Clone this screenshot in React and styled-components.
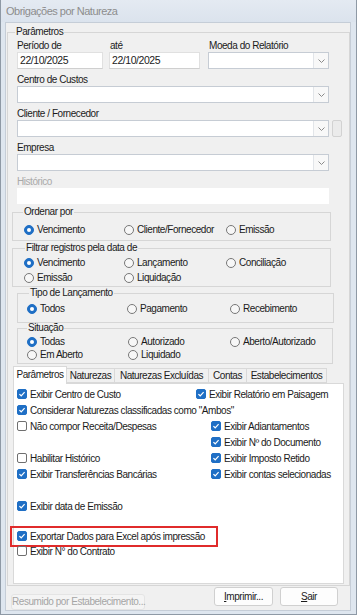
import React from 'react';
import styled, { createGlobalStyle } from 'styled-components';

const GlobalStyle = createGlobalStyle`
  html, body { margin: 0; padding: 0; background: #dee6ef; }
  body {
    font-family: "Liberation Sans", Arial, sans-serif;
    font-size: 10px;
    letter-spacing: -0.45px;
    color: #1b1b1b;
  }
`;

const Window = styled.div`
  width: 357px;
  height: 615px;
  box-sizing: border-box;
  border: 1px solid #8e99a5;
  border-top: none;
  background: #dee6ef;
  display: flex;
  flex-direction: column;
`;

const TitleBar = styled.div`
  height: 22px;
  line-height: 22px;
  padding-left: 5px;
  font-size: 11px;
  letter-spacing: -0.5px;
  color: #8d8d8d;
  background: linear-gradient(#e4eaf2, #dbe3ed);
`;

const Client = styled.div`
  flex: 1;
  margin: 0 5px 3px 4px;
  background: #f0f0f0;
  border: 1px solid #c5cdd7;
  display: flex;
  flex-direction: column;
`;

const Group = styled.fieldset`
  margin: ${p => p.$top || 0}px 0 0 ${p => p.$left || 0}px;
  width: ${p => (p.$width ? `${p.$width}px` : 'auto')};
  box-sizing: border-box;
  min-width: 0;
  padding: ${p => p.$pad || '0'};
  border: 1px solid #d6d6d6;
`;

const Legend = styled.legend`
  margin-left: ${p => p.$ml || 7}px;
  padding: 0 1px;
  line-height: 12px;
  height: 12px;
`;

const TopForm = styled.div`
  display: flex;
  flex-direction: column;
  gap: 4px;
  padding: 1px 0 0 9px;
`;

const Row = styled.div`
  display: flex;
  align-items: flex-end;
`;

const Field = styled.div`
  display: flex;
  flex-direction: column;
  width: ${p => p.$w}px;
  margin-left: ${p => p.$ml || 0}px;
`;

const Label = styled.div`
  height: 13px;
  line-height: 13px;
  padding-left: ${p => p.$pl || 0}px;
  color: ${p => (p.$disabled ? '#a9a9a9' : '#1b1b1b')};
`;

const TextBox = styled.div`
  height: ${p => p.$h || 17}px;
  box-sizing: border-box;
  background: #fff;
  border: 1px solid ${p => (p.$plain ? '#fff' : '#e0e0e0')};
  border-bottom-color: ${p => (p.$plain ? '#fff' : '#cfcfcf')};
  padding-left: 2px;
  font-size: 10.5px;
  line-height: 15px;
`;

const Combo = styled.div`
  width: ${p => p.$w}px;
  height: 17px;
  box-sizing: border-box;
  background: #fff;
  border: 1px solid #c6ccd4;
  display: flex;
  justify-content: flex-end;
`;

const DropBtn = styled.div`
  width: 14px;
  border-left: 1px solid #e2e5e9;
  background: #f8f8f8;
  display: flex;
  align-items: center;
  justify-content: center;
`;

const SmallBtn = styled.div`
  width: 10px;
  height: 17px;
  margin-left: 3px;
  box-sizing: border-box;
  background: #ebebeb;
  border: 1px solid #d2d2d2;
  border-radius: 2px;
`;

const RadioGrid = styled.div`
  display: grid;
  grid-template-columns: ${p => p.$cols};
  grid-auto-rows: 13px;
  row-gap: ${p => p.$gap || 0}px;
  padding: ${p => p.$pad};
`;

const Option = styled.div`
  display: flex;
  align-items: center;
  gap: 3px;
  white-space: nowrap;
`;

const RadioDot = styled.span`
  width: 10px;
  height: 10px;
  box-sizing: border-box;
  border-radius: 50%;
  flex: none;
  border: 1px solid ${p => (p.$on ? '#1f6fc5' : '#777')};
  background: ${p => (p.$on ? '#1f6fc5' : '#f7f7f7')};
  display: flex;
  align-items: center;
  justify-content: center;
  &::after {
    content: '';
    display: ${p => (p.$on ? 'block' : 'none')};
    width: 4px;
    height: 4px;
    border-radius: 50%;
    background: #fff;
  }
`;

const TabStrip = styled.div`
  display: flex;
  align-items: flex-end;
  height: 17px;
  margin: 2px 5px 0 5px;
`;

const Tab = styled.div`
  width: ${p => p.$w}px;
  height: ${p => (p.$active ? 18 : 15)}px;
  box-sizing: border-box;
  margin-bottom: ${p => (p.$active ? -1 : 0)}px;
  margin-left: ${p => (p.$first ? 0 : -1)}px;
  background: ${p => (p.$active ? '#fff' : '#f0f0f0')};
  border: 1px solid #d9d9d9;
  border-bottom: ${p => (p.$active ? 'none' : '1px solid #d9d9d9')};
  text-align: center;
  line-height: ${p => (p.$active ? 16 : 13)}px;
  position: relative;
  z-index: ${p => (p.$active ? 1 : 0)};
  white-space: nowrap;
`;

const Panel = styled.div`
  height: 201px;
  box-sizing: border-box;
  margin: 0 5px;
  background: #fff;
  border: 1px solid #d9d9d9;
  display: grid;
  grid-template-columns: 179px 1fr;
  grid-template-rows: repeat(6, 16px) 16px 16px 14px 16px 14px;
  padding: 2px 0 0 3px;
`;

const Check = styled.div`
  grid-row: ${p => p.$row};
  grid-column: ${p => p.$col || 1};
  padding-left: ${p => p.$pl || 0}px;
  display: flex;
  align-items: center;
  gap: 3px;
  white-space: nowrap;
  position: relative;
  ${p => p.$marked && `
    &::after {
      content: '';
      position: absolute;
      left: -7px;
      top: -2px;
      width: 208px;
      height: 21px;
      box-sizing: border-box;
      border: 2px solid #e02b2b;
    }
  `}
`;

const CheckBox = styled.span`
  width: 10px;
  height: 10px;
  box-sizing: border-box;
  flex: none;
  border-radius: 2px;
  border: 1px solid ${p => (p.$on ? '#1f6fc5' : '#6f6f6f')};
  background: ${p => (p.$on ? '#1f6fc5' : '#fff')};
  display: flex;
  align-items: center;
  justify-content: center;
`;

const BottomBar = styled.div`
  flex: 1;
  display: flex;
  align-items: flex-start;
  padding: 1px 12px 0 5px;
`;

const Button = styled.div`
  height: ${p => (p.$disabled ? 16 : 19)}px;
  width: ${p => p.$w}px;
  box-sizing: border-box;
  margin-left: ${p => p.$ml || '0'};
  align-self: ${p => (p.$disabled ? 'flex-end' : 'flex-start')};
  background: ${p => (p.$disabled ? '#f4f4f4' : '#fdfdfd')};
  border: 1px solid ${p => (p.$disabled ? '#e4e4e4' : '#d0d0d0')};
  border-radius: 3px;
  color: ${p => (p.$disabled ? '#a5a5a5' : '#1b1b1b')};
  text-align: center;
  line-height: ${p => (p.$disabled ? 14 : 17)}px;
  white-space: nowrap;
`;

const Chevron = () => (
  <svg width="7" height="4" viewBox="0 0 7 4">
    <path d="M0.5 0.5 L3.5 3.5 L6.5 0.5" stroke="#8a8a8a" fill="none" />
  </svg>
);

const Tick = () => (
  <svg width="8" height="8" viewBox="0 0 8 8">
    <path d="M1.4 4.1 L3.2 5.8 L6.6 2.1" stroke="#fff" strokeWidth="1.2" fill="none" />
  </svg>
);

const Radio = ({ on, children }) => (
  <Option>
    <RadioDot $on={on} />
    <span>{children}</span>
  </Option>
);

const Checkable = ({ on, children, ...rest }) => (
  <Check {...rest}>
    <CheckBox $on={on}>{on && <Tick />}</CheckBox>
    <span>{children}</span>
  </Check>
);

const ComboBox = ({ w }) => (
  <Combo $w={w}>
    <DropBtn><Chevron /></DropBtn>
  </Combo>
);

const tabs = [
  { label: 'Parâmetros', w: 54 },
  { label: 'Naturezas', w: 49 },
  { label: 'Naturezas Excluídas', w: 95 },
  { label: 'Contas', w: 39 },
  { label: 'Estabelecimentos', w: 81 },
];

export default function App() {
  return (
    <>
      <GlobalStyle />
      <Window>
        <TitleBar>Obrigações por Natureza</TitleBar>
        <Client>
          <Group $top={3} $left={1} $pad="0 0 1px 0">
            <Legend $ml={7}>Parâmetros</Legend>
            <TopForm>
              <Row>
                <Field $w={86}>
                  <Label>Período de</Label>
                  <TextBox>22/10/2025</TextBox>
                </Field>
                <Field $w={91} $ml={6}>
                  <Label $pl={1}>até</Label>
                  <TextBox>22/10/2025</TextBox>
                </Field>
                <Field $w={121} $ml={8}>
                  <Label $pl={1}>Moeda do Relatório</Label>
                  <ComboBox w={121} />
                </Field>
              </Row>
              <Field $w={312}>
                <Label>Centro de Custos</Label>
                <ComboBox w={312} />
              </Field>
              <Field $w={326}>
                <Label>Cliente / Fornecedor</Label>
                <Row>
                  <ComboBox w={312} />
                  <SmallBtn />
                </Row>
              </Field>
              <Field $w={312}>
                <Label>Empresa</Label>
                <ComboBox w={312} />
              </Field>
              <Field $w={312}>
                <Label $disabled>Histórico</Label>
                <TextBox $plain $h={16} />
              </Field>
            </TopForm>

            <Group $top={2} $left={4} $width={319}>
              <Legend $ml={10}>Ordenar por</Legend>
              <RadioGrid $cols="100px 102px auto" $pad="5px 0 4px 11px">
                <Radio on>Vencimento</Radio>
                <Radio>Cliente/Fornecedor</Radio>
                <Radio>Emissão</Radio>
              </RadioGrid>
            </Group>

            <Group $top={1} $left={4} $width={319}>
              <Legend $ml={12}>Filtrar registros pela data de</Legend>
              <RadioGrid $cols="100px 102px auto" $gap={2} $pad="2px 0 2px 11px">
                <Radio on>Vencimento</Radio>
                <Radio>Lançamento</Radio>
                <Radio>Conciliação</Radio>
                <Radio>Emissão</Radio>
                <Radio>Liquidação</Radio>
              </RadioGrid>
            </Group>

            <Group $top={0} $left={9} $width={317}>
              <Legend $ml={11}>Tipo de Lançamento</Legend>
              <RadioGrid $cols="100px 103px auto" $pad="3px 0 7px 9px">
                <Radio on>Todos</Radio>
                <Radio>Pagamento</Radio>
                <Radio>Recebimento</Radio>
              </RadioGrid>
            </Group>

            <Group $top={-1} $left={9} $width={316}>
              <Legend $ml={9}>Situação</Legend>
              <RadioGrid $cols="101px 102px auto" $pad="1px 0 2px 9px">
                <Radio on>Todas</Radio>
                <Radio>Autorizado</Radio>
                <Radio>Aberto/Autorizado</Radio>
                <Radio>Em Aberto</Radio>
                <Radio>Liquidado</Radio>
              </RadioGrid>
            </Group>

            <TabStrip>
              {tabs.map((t, i) => (
                <Tab key={t.label} $w={t.w} $active={i === 0} $first={i === 0}>
                  {t.label}
                </Tab>
              ))}
            </TabStrip>
            <Panel>
              <Checkable on $row={1}>Exibir Centro de Custo</Checkable>
              <Checkable on $row={1} $col={2}>Exibir Relatório em Paisagem</Checkable>
              <Checkable on $row={2} $col="1 / 3">Considerar Naturezas classificadas como "Ambos"</Checkable>
              <Checkable $row={3}>Não compor Receita/Despesas</Checkable>
              <Checkable on $row={3} $col={2} $pl={15}>Exibir Adiantamentos</Checkable>
              <Checkable on $row={4} $col={2} $pl={15}>Exibir Nº do Documento</Checkable>
              <Checkable $row={5}>Habilitar Histórico</Checkable>
              <Checkable on $row={5} $col={2} $pl={15}>Exibir Imposto Retido</Checkable>
              <Checkable on $row={6}>Exibir Transferências Bancárias</Checkable>
              <Checkable on $row={6} $col={2} $pl={15}>Exibir contas selecionadas</Checkable>
              <Checkable on $row={8}>Exibir data de Emissão</Checkable>
              <Checkable on $row={10} $marked>Exportar Dados para Excel após impressão</Checkable>
              <Checkable $row={11}>Exibir N° do Contrato</Checkable>
            </Panel>
          </Group>
          <BottomBar>
            <Button $disabled $w={134}>Resumido por Estabelecimento...</Button>
            <Button $w={59} $ml="auto"><u>I</u>mprimir...</Button>
            <Button $w={58} $ml="7px"><u>S</u>air</Button>
          </BottomBar>
        </Client>
      </Window>
    </>
  );
}
